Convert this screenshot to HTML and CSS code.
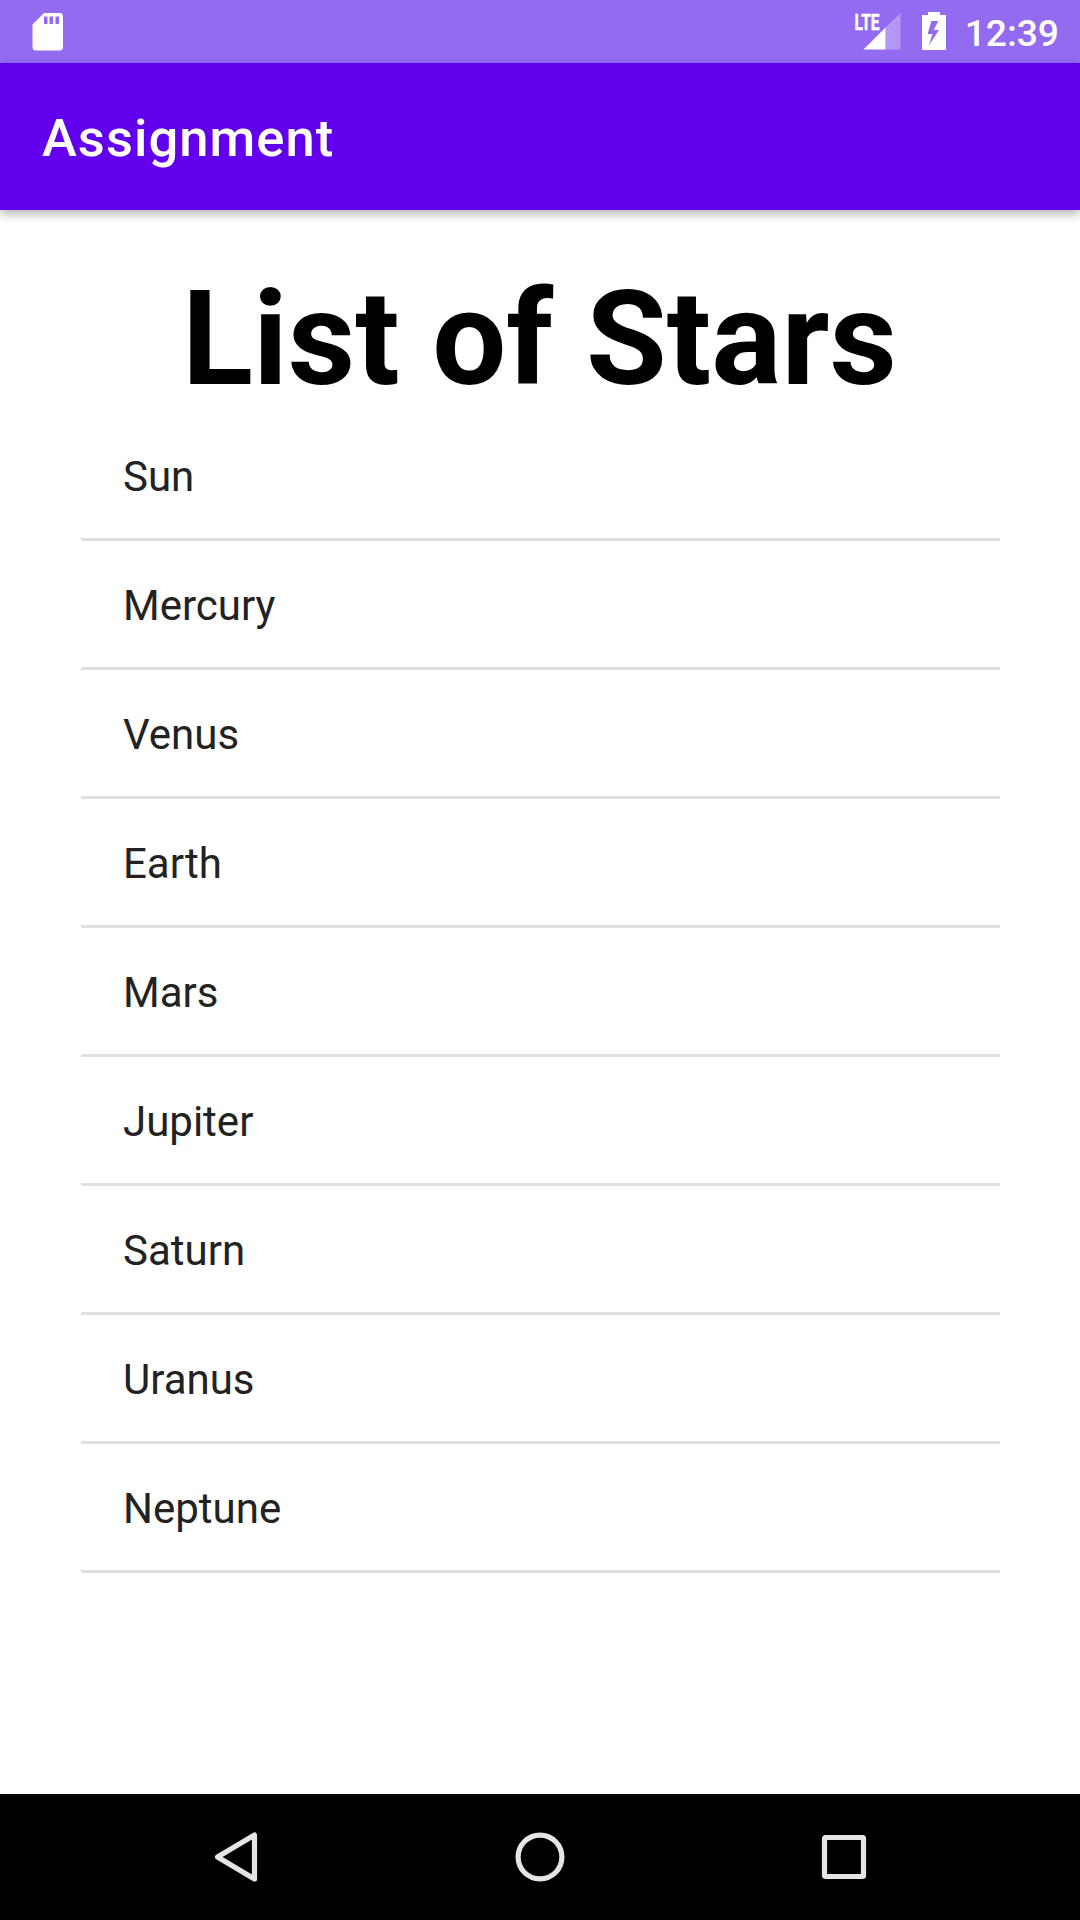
FILE: index.html
```html
<!DOCTYPE html>
<html lang="en">
<head>
<meta charset="utf-8">
<title>Assignment</title>
<link rel="stylesheet" href="styles.css">
</head>
<body>
<div class="screen">
  <div class="status-bar">
    <svg class="sd-card" width="32" height="40" viewBox="0 0 32 40">
      <path fill="#fff" fill-rule="evenodd" d="M12 1H27.500Q31 1 31 4.500V35Q31 38.500 27.500 38.500H4Q.5 38.500 .5 35V12.500ZM12 4.500V12H15.500V4.500ZM17.500 4.500V12H21V4.500ZM23.500 4.500V12H27V4.500Z"/>
    </svg>
    <div class="status-icons">
      <svg class="signal" width="56" height="48" viewBox="-4 -8 56 48">
        <path fill="#fff" fill-opacity=".3" d="M46.500 1V37.500H31.500V15.500Z"/>
        <path fill="#fff" d="M9.500 37.500L31.500 15.500V37.500Z"/>
        <text class="network" x="0.5" y="17.500" textLength="25" lengthAdjust="spacingAndGlyphs">LTE</text>
      </svg>
      <svg class="battery" width="24" height="38" viewBox="0 0 24 38">
        <path fill="#fff" fill-rule="evenodd" d="M6 0H18V3H24V38H0V3H6ZM9.300 9L5.600 22H10.500L6.700 33.500L17 18H11.700L16.300 9Z"/>
      </svg>
      <span class="clock">12:39</span>
    </div>
  </div>
  <header class="app-bar">Assignment</header>
  <main class="content">
    <h1 class="heading">List of Stars</h1>
    <ul class="star-list">
      <li class="star">Sun</li>
      <li class="star">Mercury</li>
      <li class="star">Venus</li>
      <li class="star">Earth</li>
      <li class="star">Mars</li>
      <li class="star">Jupiter</li>
      <li class="star">Saturn</li>
      <li class="star">Uranus</li>
      <li class="star">Neptune</li>
    </ul>
  </main>
  <nav class="nav-bar">
    <svg class="nav-icon" width="60" height="60" viewBox="0 0 60 60">
      <path d="M11.500 30L48.500 8V52Z"/>
    </svg>
    <svg class="nav-icon" width="60" height="60" viewBox="0 0 60 60">
      <circle cx="30" cy="30" r="21.900"/>
    </svg>
    <svg class="nav-icon" width="60" height="60" viewBox="0 0 60 60">
      <rect x="10.500" y="10.500" width="39" height="39" rx="1"/>
    </svg>
  </nav>
</div>
</body>
</html>
```
FILE: styles.css
```css
* {
  box-sizing: border-box;
}

body {
  margin: 0;
  font-family: Roboto, "Liberation Sans", sans-serif;
  background: #fff;
}

.screen {
  display: flex;
  flex-direction: column;
  width: 1080px;
  height: 1920px;
  overflow: hidden;
}

.status-bar {
  display: flex;
  justify-content: space-between;
  align-items: flex-start;
  height: 63px;
  padding: 4px 21px 0 32px;
  background: #936bf0;
}

.sd-card {
  margin-top: 8px;
}

.status-icons {
  display: flex;
  align-items: flex-start;
}

.battery {
  margin: 8px 0 0 16px;
}

.network {
  fill: #fff;
  stroke: #fff;
  stroke-width: 0.5px;
  font-size: 22.5px;
  font-weight: 700;
}

.clock {
  margin: 8px 0 0 19px;
  color: #fff;
  font-size: 37.2px;
  font-weight: 500;
  line-height: 43px;
}

.app-bar {
  z-index: 1;
  height: 147px;
  padding: 2px 42px 0;
  background: #6200ee;
  box-shadow: 0 4px 10px rgba(0, 0, 0, 0.3);
  color: #fff;
  font-size: 52.5px;
  font-weight: 500;
  line-height: 147px;
  letter-spacing: 1.05px;
}

.content {
  display: flex;
  flex: 1;
  flex-direction: column;
  padding: 50px 80px 0 81px;
}

.heading {
  margin: 0;
  height: 152px;
  padding-right: 2px;
  color: #000;
  font-size: 131.25px;
  font-weight: 700;
  line-height: 158px;
  text-align: center;
  white-space: nowrap;
}

.star-list {
  margin: 0;
  padding: 0;
  list-style: none;
}

.star {
  height: 129px;
  padding: 3px 42px 0;
  border-bottom: 3px solid #dfdfdf;
  color: #222;
  font-size: 42px;
  line-height: 124px;
}

.nav-bar {
  display: flex;
  justify-content: space-between;
  align-items: center;
  height: 126px;
  padding: 0 206px;
  background: #000;
}

.nav-icon {
  fill: none;
  stroke: #e5e5e5;
  stroke-width: 5.2px;
  stroke-linejoin: round;
}
```
